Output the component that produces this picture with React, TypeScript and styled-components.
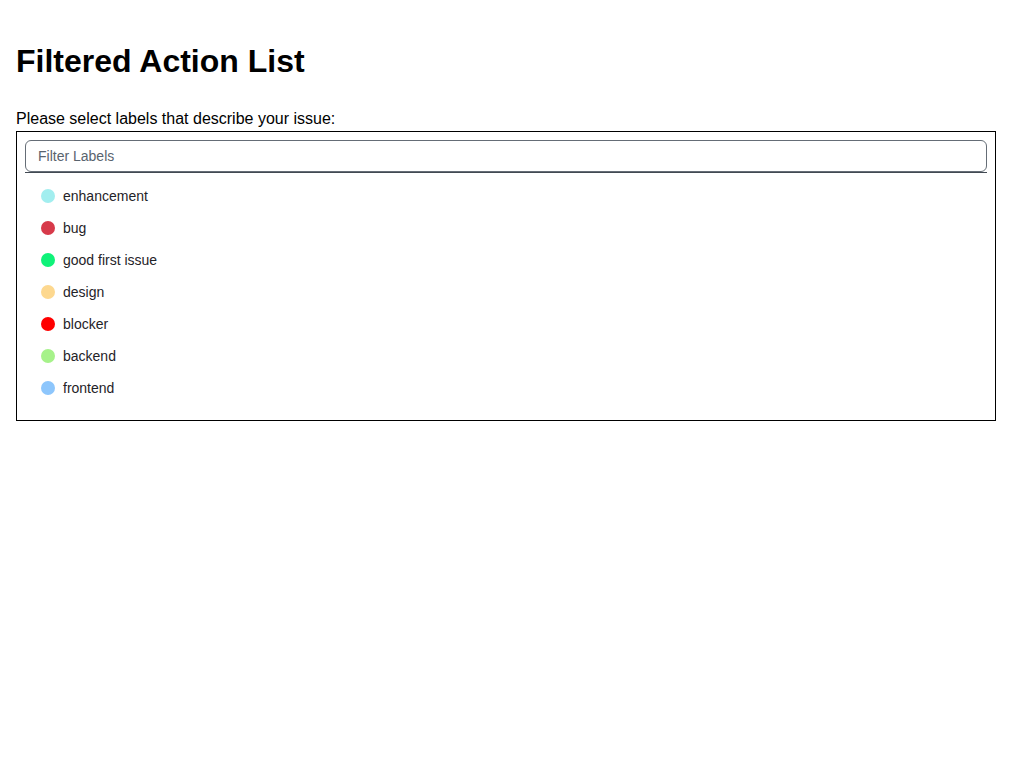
import styled, { createGlobalStyle } from "styled-components";

const GlobalStyle = createGlobalStyle`
  body {
    margin: 0;
    font-family: "Liberation Sans", Arial, sans-serif;
    color: #000;
    background: #fff;
  }
`;

const Page = styled.div`
  padding: 0 16px;
  overflow: hidden;
`;

const Title = styled.h1`
  font-size: 32px;
  font-weight: 700;
  margin: 37px 0 0;
  line-height: 48px;
`;

const Prompt = styled.p`
  font-size: 16px;
  line-height: 18px;
  margin: 25px 0 3px;
`;

const Panel = styled.div`
  border: 1px solid #000;
  padding: 8px 8px 16px;
`;

const FilterInput = styled.input`
  display: block;
  box-sizing: border-box;
  width: 100%;
  height: 32px;
  padding: 0 12px;
  border: 1px solid #656d76;
  border-radius: 6px;
  font-family: inherit;
  font-size: 14px;
  color: #1f2328;
  background: #fff;
  outline: none;
  &::placeholder {
    color: #59636e;
  }
`;

const Divider = styled.div`
  height: 1px;
  background: #424a53;
`;

const List = styled.ul`
  list-style: none;
  margin: 0;
  padding: 7px 0 0;
`;

const Item = styled.li`
  display: flex;
  align-items: center;
  gap: 8px;
  height: 32px;
  padding: 0 16px;
  font-size: 14px;
  color: #1f2328;
`;

const Dot = styled.span<{ $color: string }>`
  width: 14px;
  height: 14px;
  border-radius: 50%;
  flex-shrink: 0;
  background: ${(p) => p.$color};
`;

const labels = [
  { name: "enhancement", color: "#a2eeef" },
  { name: "bug", color: "#d73a4a" },
  { name: "good first issue", color: "#0ff279" },
  { name: "design", color: "#fdd88f" },
  { name: "blocker", color: "#ff0000" },
  { name: "backend", color: "#a6f28a" },
  { name: "frontend", color: "#8dc6fc" },
];

export default function App() {
  return (
    <Page>
      <GlobalStyle />
      <Title>Filtered Action List</Title>
      <Prompt>Please select labels that describe your issue:</Prompt>
      <Panel>
        <FilterInput placeholder="Filter Labels" />
        <Divider />
        <List>
          {labels.map((l) => (
            <Item key={l.name}>
              <Dot $color={l.color} />
              {l.name}
            </Item>
          ))}
        </List>
      </Panel>
    </Page>
  );
}
